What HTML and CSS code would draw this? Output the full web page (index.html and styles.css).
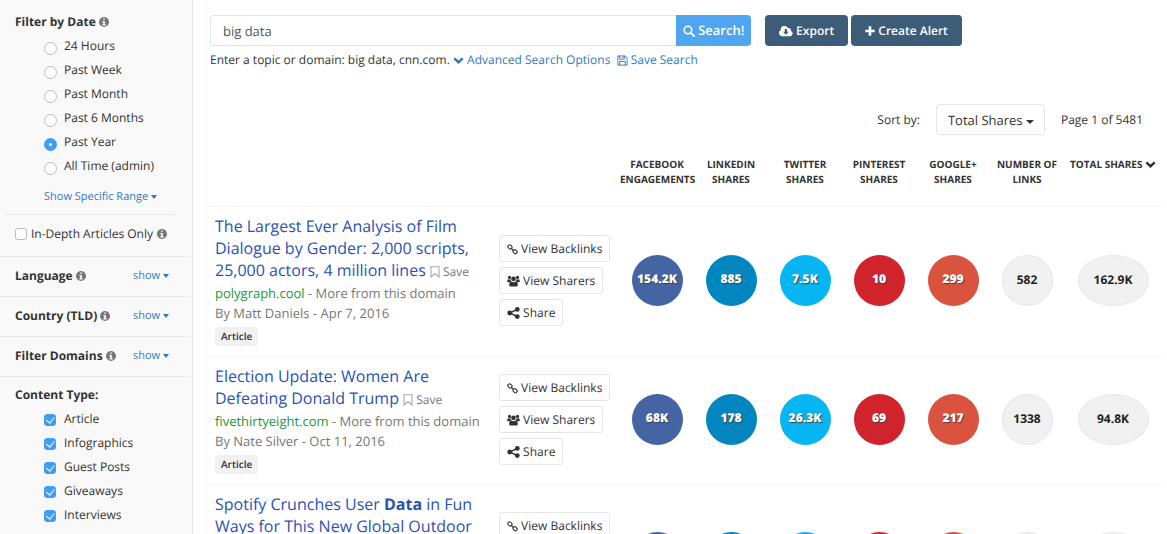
FILE: index.html
```html
<!DOCTYPE html>
<html lang="en">
<head>
  <meta charset="UTF-8">
  <title>big data</title>
  <link rel="stylesheet" href="styles.css">
</head>
<body>
  <!-- icon set -->
  <svg class="sprite" aria-hidden="true">
    <symbol id="info" viewBox="0 0 12 12"><path fill-rule="evenodd" d="M6 0a6 6 0 1 0 0 12A6 6 0 0 0 6 0zM5 1.8h2v1.6H5zM4 4.7h3v4h1v1.4H4V8.7h1V6H4z"/></symbol>
    <symbol id="search" viewBox="0 0 14 14"><circle cx="5.8" cy="5.8" r="4.4" fill="none" stroke="currentColor" stroke-width="1.9"/><path d="M9 9l4 4" stroke="currentColor" stroke-width="2.3" stroke-linecap="round"/></symbol>
    <symbol id="cloud" viewBox="0 0 15 12"><path fill-rule="evenodd" d="M3.3 11.5A3.3 3.3 0 0 1 1.9 5.2 4.1 4.1 0 0 1 9.7 3a2.3 2.3 0 0 1 3 2.9 2.9 2.9 0 0 1-.8 5.6zM6.2 3.8v2.9H4.3l3.1 3.2 3.1-3.2H8.6V3.8z"/></symbol>
    <symbol id="plus" viewBox="0 0 10 10"><path d="M3.7.3h2.6v3.4h3.4v2.6H6.3v3.4H3.7V6.3H.3V3.7h3.4z"/></symbol>
    <symbol id="chevron" viewBox="0 0 12 8"><path d="M1.200 1.600L6 6l4.800-4.400" fill="none" stroke="currentColor" stroke-width="2.800"/></symbol>
    <symbol id="floppy" viewBox="0 0 12 12"><path d="M1 1h8l2 2v8H1zM3 1v3.500h5V1M3 11V7h6v4M6.500 1.500v2" fill="none" stroke="currentColor"/></symbol>
    <symbol id="bookmark" viewBox="0 0 10 12"><path d="M1 .7h8v10.300L5 7.500 1 11z" fill="none" stroke="currentColor" stroke-width="1.100"/></symbol>
    <symbol id="link" viewBox="0 0 12 12"><g fill="none" stroke="currentColor" stroke-width="1.200"><rect x="-2.400" y="-1.800" width="4.800" height="3.600" rx="1.700" transform="translate(3.200 3.200) rotate(45)"/><rect x="-2.400" y="-1.800" width="4.800" height="3.600" rx="1.700" transform="translate(8.800 8.400) rotate(45)"/><path d="M4.400 4.400l3.200 3"/></g></symbol>
    <symbol id="users" viewBox="0 0 14 12"><circle cx="2.700" cy="2.100" r="1.700"/><circle cx="11.300" cy="2.100" r="1.700"/><circle cx="7" cy="3.700" r="2.500"/><path d="M.2 6.600c0-1.500.3-2.600 1.100-2.600.9.600 1.900.6 2.600.2 0 1 .3 1.700.7 2.300-.9 0-1.500.3-2 .8H1C.5 7.300.2 7 .2 6.600zM13.800 6.600c0-1.500-.3-2.600-1.100-2.600-.9.600-1.900.6-2.600.2 0 1-.3 1.700-.7 2.300.9 0 1.500.3 2 .8H13c.5 0 .8-.3.8-.7zM4.700 6.600c1.500 1 3.100 1 4.600 0 1.700 0 2.300 1.600 2.300 3.600 0 1.100-.7 1.700-1.700 1.700H4.100c-1 0-1.700-.6-1.700-1.700 0-2 .6-3.600 2.300-3.600z"/></symbol>
    <symbol id="share" viewBox="0 0 13 12"><circle cx="2.700" cy="6" r="2.400"/><circle cx="10.300" cy="2.400" r="2.400"/><circle cx="10.300" cy="9.600" r="2.400"/><path d="M10.300 2.400L2.700 6l7.600 3.600" fill="none" stroke="currentColor" stroke-width="1.600"/></symbol>
  </svg>

  <div class="page">
    <aside class="sidebar">
      <fieldset class="filter dates">
        <legend>Filter by Date <svg class="icon info"><use href="#info"/></svg></legend>
        <label class="option"><input type="radio" name="date"> 24 Hours</label>
        <label class="option"><input type="radio" name="date"> Past Week</label>
        <label class="option"><input type="radio" name="date"> Past Month</label>
        <label class="option"><input type="radio" name="date"> Past 6 Months</label>
        <label class="option"><input type="radio" name="date" checked> Past Year</label>
        <label class="option"><input type="radio" name="date"> All Time (admin)</label>
        <a href="#" class="range">Show Specific Range <span class="caret"></span></a>
      </fieldset>
      <label class="in-depth"><input type="checkbox"> In-Depth Articles Only <svg class="icon info"><use href="#info"/></svg></label>
      <div class="toggle">
        <strong>Language <svg class="icon info"><use href="#info"/></svg></strong>
        <a href="#">show <span class="caret"></span></a>
      </div>
      <div class="toggle">
        <strong>Country (TLD) <svg class="icon info"><use href="#info"/></svg></strong>
        <a href="#">show <span class="caret"></span></a>
      </div>
      <div class="toggle">
        <strong>Filter Domains <svg class="icon info"><use href="#info"/></svg></strong>
        <a href="#">show <span class="caret"></span></a>
      </div>
      <fieldset class="filter types">
        <legend>Content Type:</legend>
        <label class="option"><input type="checkbox" checked> Article</label>
        <label class="option"><input type="checkbox" checked> Infographics</label>
        <label class="option"><input type="checkbox" checked> Guest Posts</label>
        <label class="option"><input type="checkbox" checked> Giveaways</label>
        <label class="option"><input type="checkbox" checked> Interviews</label>
      </fieldset>
    </aside>

    <main class="main">
      <form class="toolbar">
        <div class="search">
          <input type="text" id="topic" value="big data">
          <button type="button" class="btn-search"><svg class="icon i12"><use href="#search"/></svg> Search!</button>
        </div>
        <button type="button" class="btn-dark"><svg class="icon i14"><use href="#cloud"/></svg> Export</button>
        <button type="button" class="btn-dark"><svg class="icon i10"><use href="#plus"/></svg> Create Alert</button>
      </form>
      <div class="hint">
        <label for="topic">Enter a topic or domain: big data, cnn.com.</label>
        <a href="#"><svg class="icon chevron"><use href="#chevron"/></svg> Advanced Search Options</a>
        <a href="#" class="save-search"><svg class="icon i11"><use href="#floppy"/></svg> Save Search</a>
      </div>

      <div class="sort">
        <label for="sort">Sort by:</label>
        <span class="select">
          <select id="sort"><option>Total Shares</option></select>
        </span>
        <span>Page 1 of 5481</span>
      </div>

      <table class="results">
        <colgroup>
          <col>
          <col class="col-actions">
          <col class="col-num" span="6">
          <col class="col-total">
        </colgroup>
        <thead>
          <tr>
            <td colspan="2"></td>
            <th>Facebook<br>Engagements</th>
            <th>LinkedIn<br>Shares</th>
            <th>Twitter<br>Shares</th>
            <th>Pinterest<br>Shares</th>
            <th>Google+<br>Shares</th>
            <th>Number of<br>Links</th>
            <th>Total Shares <svg class="icon chevron"><use href="#chevron"/></svg></th>
          </tr>
        </thead>
        <tbody>
          <tr>
            <td class="article">
              <h3><a href="#">The Largest Ever Analysis of Film Dialogue by Gender: 2,000 scripts, 25,000 actors, 4 million lines</a> <a href="#" class="save"><svg class="icon bookmark"><use href="#bookmark"/></svg> Save</a></h3>
              <p><a href="#" class="domain">polygraph.cool</a> - <a href="#">More from this domain</a></p>
              <p>By Matt Daniels - Apr 7, 2016</p>
              <span class="tag">Article</span>
            </td>
            <td>
              <div class="actions">
                <button type="button"><svg class="icon i11"><use href="#link"/></svg> View Backlinks</button>
                <button type="button"><svg class="icon i13"><use href="#users"/></svg> View Sharers</button>
                <button type="button"><svg class="icon i13"><use href="#share"/></svg> Share</button>
              </div>
            </td>
            <td><span class="count facebook">154.2K</span></td>
            <td><span class="count linkedin">885</span></td>
            <td><span class="count twitter">7.5K</span></td>
            <td><span class="count pinterest">10</span></td>
            <td><span class="count google">299</span></td>
            <td><span class="count plain">582</span></td>
            <td><span class="count plain total">162.9K</span></td>
          </tr>
          <tr>
            <td class="article">
              <h3><a href="#">Election Update: Women Are Defeating Donald Trump</a> <a href="#" class="save"><svg class="icon bookmark"><use href="#bookmark"/></svg> Save</a></h3>
              <p><a href="#" class="domain">fivethirtyeight.com</a> - <a href="#">More from this domain</a></p>
              <p>By Nate Silver - Oct 11, 2016</p>
              <span class="tag">Article</span>
            </td>
            <td>
              <div class="actions">
                <button type="button"><svg class="icon i11"><use href="#link"/></svg> View Backlinks</button>
                <button type="button"><svg class="icon i13"><use href="#users"/></svg> View Sharers</button>
                <button type="button"><svg class="icon i13"><use href="#share"/></svg> Share</button>
              </div>
            </td>
            <td><span class="count facebook">68K</span></td>
            <td><span class="count linkedin">178</span></td>
            <td><span class="count twitter">26.3K</span></td>
            <td><span class="count pinterest">69</span></td>
            <td><span class="count google">217</span></td>
            <td><span class="count plain">1338</span></td>
            <td><span class="count plain total">94.8K</span></td>
          </tr>
          <tr class="tall">
            <td class="article">
              <h3><a href="#">Spotify Crunches User <b>Data</b> in Fun Ways for This New Global Outdoor</a></h3>
            </td>
            <td>
              <div class="actions">
                <button type="button"><svg class="icon i11"><use href="#link"/></svg> View Backlinks</button>
                <button type="button"><svg class="icon i13"><use href="#users"/></svg> View Sharers</button>
                <button type="button"><svg class="icon i13"><use href="#share"/></svg> Share</button>
              </div>
            </td>
            <td><span class="count facebook"></span></td>
            <td><span class="count linkedin"></span></td>
            <td><span class="count twitter"></span></td>
            <td><span class="count pinterest"></span></td>
            <td><span class="count google"></span></td>
            <td><span class="count plain"></span></td>
            <td><span class="count plain total"></span></td>
          </tr>
        </tbody>
      </table>
    </main>
  </div>
</body>
</html>
```
FILE: styles.css
```css
* {
  box-sizing: border-box;
}
body {
  margin: 0;
  font-family: "Open Sans", sans-serif;
  font-size: 12px;
  line-height: 20px;
  text-rendering: geometricPrecision;
  color: #333;
  background: #fff;
}
a {
  color: #337ab7;
  text-decoration: none;
}
button, input, select {
  font-family: inherit;
  color: inherit;
  text-rendering: inherit;
  margin: 0;
}
button {
  cursor: pointer;
}
.page {
  display: flex;
  height: 100vh;
  overflow: hidden;
}

/* icons */
.sprite {
  display: none;
}
.icon {
  width: 12px;
  height: 12px;
  fill: currentColor;
  vertical-align: -2px;
}
.i10 { width: 10px; height: 10px; vertical-align: -1px; }
.i11 { width: 11px; height: 11px; }
.i13 { width: 13px; }
.i14 { width: 14px; }
.info {
  width: 10px;
  height: 10px;
  vertical-align: -1px;
  color: #777;
}
.chevron {
  width: 11px;
  height: 7px;
  vertical-align: 0;
}
.caret {
  display: inline-block;
  border: 3px solid transparent;
  border-top: 4px solid;
  border-bottom: 0;
  vertical-align: middle;
}

/* sidebar */
.sidebar {
  flex: 0 0 193px;
  background: #f9f9f9;
  border-right: 1px solid #dfe6ee;
  padding: 12px 3px 0 0;
}
.filter {
  margin: 0;
  border: 0;
  padding: 0 0 0 15px;
  min-width: 0;
}
.filter legend {
  padding: 0;
  font-weight: bold;
  height: 22px;
}
.dates {
  margin: 0 14px 0 4px;
  padding: 0 0 7px 11px;
  border-bottom: 1px solid #eaeaea;
}
.option {
  display: flex;
  align-items: center;
  gap: 7px;
  height: 24px;
  padding-left: 29px;
}
input[type="radio"],
input[type="checkbox"] {
  appearance: none;
  flex: none;
  width: 13px;
  height: 13px;
  border: 1px solid #bbb;
  background: #fff;
}
input[type="radio"] {
  margin-top: 4px;
  border-radius: 50%;
}
input[type="radio"]:checked {
  border: 5px solid #419bf9;
}
input[type="checkbox"] {
  width: 12px;
  height: 12px;
  border-radius: 3px;
}
input[type="checkbox"]:checked {
  display: grid;
  place-items: center;
  border-color: #419bf9;
  background: #419bf9;
}
input[type="checkbox"]:checked::after {
  content: "";
  width: 4px;
  height: 7px;
  margin-bottom: 2px;
  border: solid #fff;
  border-width: 0 1px 1px 0;
  transform: rotate(40deg);
}
.range {
  display: block;
  padding: 9px 0 0 29px;
  font-size: 11px;
}
.in-depth {
  display: flex;
  align-items: center;
  gap: 4px;
  height: 42px;
  padding: 0 0 3px 15px;
  border-bottom: 1px solid #eaeaea;
}
.toggle {
  display: flex;
  align-items: center;
  justify-content: space-between;
  height: 40px;
  padding: 0 20px 2px 15px;
  border-bottom: 1px solid #eaeaea;
}
.toggle a {
  font-size: 11px;
}
.types {
  margin-top: 8px;
}
.types .option {
  gap: 8px;
}
.types input {
  margin-top: 2px;
}

/* search bar */
.main {
  flex: 1;
  min-width: 0;
  padding: 15px 5px 0 15px;
}
.toolbar {
  display: flex;
  gap: 3px;
  padding-left: 2px;
}
.search {
  display: flex;
  flex: 0 1 541px;
  margin-right: 11px;
}
.search input {
  flex: 1;
  min-width: 0;
  height: 31px;
  padding: 0 12px;
  border: 1px solid #d9e5f0;
  border-right: 0;
  border-radius: 4px 0 0 4px;
  font-size: 13px;
  color: #555;
}
.btn-search {
  width: 75px;
  padding: 0 0 2px;
  border: 0;
  border-radius: 0 4px 4px 0;
  background: #4fa5f0;
  color: #fff;
  font-size: 13px;
  font-weight: 600;
}
.btn-dark {
  padding: 0 14px;
  border: 0;
  border-radius: 4px;
  background: #3d5c78;
  color: #fff;
  font-size: 12px;
  font-weight: 600;
}
.hint {
  padding: 4px 0 0 2px;
}
.save-search {
  margin-left: 3px;
}
.sort {
  display: flex;
  justify-content: flex-end;
  align-items: center;
  gap: 16px;
  margin-top: 34px;
  padding-right: 19px;
}
.select {
  position: relative;
}
.select select {
  appearance: none;
  width: 109px;
  height: 31px;
  padding: 0 11px;
  border: 1px solid #e1e6ec;
  border-radius: 4px;
  background: #fff;
  font-size: 13px;
}
.select::after {
  content: "";
  position: absolute;
  right: 11px;
  top: 50%;
  border: 4px solid transparent;
  border-top-color: #333;
  border-bottom: 0;
}

/* results */
.results {
  width: 100%;
  margin-top: 22px;
  table-layout: fixed;
  border-collapse: collapse;
}
.col-actions { width: 130px; }
.col-num { width: 74px; }
.col-total { width: 98px; }
.results th {
  height: 49px;
  padding: 0;
  font-size: 10px;
  line-height: 15px;
  text-transform: uppercase;
  vertical-align: top;
  white-space: nowrap;
}
.results td {
  padding: 0 0 2px;
}
.results tbody tr {
  border-top: 1px solid #f3f3f3;
}
.results .tall {
  height: 148px;
}
.results .article {
  padding: 8px 8px 10px 7px;
  vertical-align: top;
}
.article h3 {
  margin: 0;
  font-size: 16px;
  font-weight: normal;
  line-height: 22px;
}
.article h3 a {
  color: #2a52b5;
}
.article p {
  margin: 0;
  font-size: 13px;
  color: #777;
}
.article p a {
  color: #777;
}
.article p .domain {
  color: #1a9641;
}
.article h3 .save {
  font-size: 12px;
  color: #777;
  white-space: nowrap;
}
.article .bookmark {
  width: 10px;
  color: #aaa;
}
.tag {
  display: block;
  width: max-content;
  margin-top: 4px;
  padding: 0 6px;
  border-radius: 3px;
  background: #f1f1f1;
  font-size: 10px;
  font-weight: 600;
  line-height: 19px;
}
.actions {
  display: flex;
  flex-direction: column;
  align-items: flex-start;
  gap: 5px;
  padding-left: 9px;
}
.actions button {
  height: 27px;
  padding: 0 7px;
  border: 1px solid #e5e5e5;
  border-radius: 3px;
  background: #fff;
  font-size: 12px;
}
.count {
  display: flex;
  align-items: center;
  justify-content: center;
  width: 51px;
  height: 51px;
  margin: 0 auto;
  padding-bottom: 2px;
  border-radius: 50%;
  color: #fff;
  font-weight: 800;
  text-shadow: 1px 1px 1px #444;
}
.facebook { background: #4464a3; }
.linkedin { background: #0286c0; }
.twitter { background: #06b5f1; }
.pinterest { background: #d1232c; }
.google { background: #da533e; }
.plain {
  padding: 0;
  border: 1px solid #e6e6e6;
  background: #f1f1f1;
  color: #222;
  font-weight: bold;
  text-shadow: none;
}
.total {
  width: 71px;
}
```
